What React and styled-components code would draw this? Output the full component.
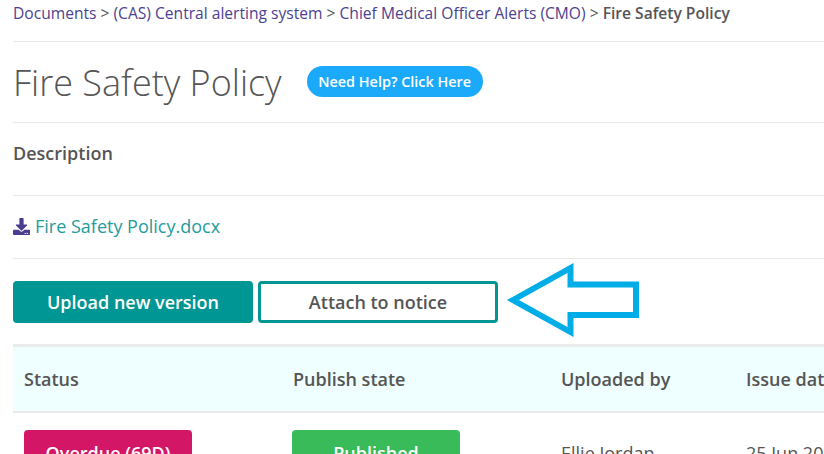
import styled, { createGlobalStyle } from "styled-components";
import { FaDownload } from "react-icons/fa";

const crumbs = [
  "Documents",
  "(CAS) Central alerting system",
  "Chief Medical Officer Alerts (CMO)",
];

const columns = [
  { title: "Status", width: 269 },
  { title: "Publish state", width: 268 },
  { title: "Uploaded by", width: 185 },
  { title: "Issue date", width: 120 },
];

export default function App() {
  return (
    <Page>
      <GlobalStyle />
      <Breadcrumb>
        {crumbs.map((crumb) => (
          <span key={crumb}>
            <CrumbLink>{crumb}</CrumbLink>
            <Separator> &gt; </Separator>
          </span>
        ))}
        <Current>Fire Safety Policy</Current>
      </Breadcrumb>

      <TitleRow>
        <Title>Fire Safety Policy</Title>
        <HelpButton>Need Help? Click Here</HelpButton>
      </TitleRow>

      <DescriptionRow>Description</DescriptionRow>

      <FileRow>
        <FaDownload size={17} color="#4a3c8f" />
        <FileLink>Fire Safety Policy.docx</FileLink>
      </FileRow>

      <Actions>
        <PrimaryButton>Upload new version</PrimaryButton>
        <OutlineButton>Attach to notice</OutlineButton>
        <Arrow width="136" height="82" viewBox="0 0 136 82">
          <path
            d="M8 43 L65.5 11 L65.5 27.5 L131 27.5 L131 58 L65.5 58 L65.5 75 Z"
            fill="none"
            stroke="#00ade6"
            strokeWidth="6"
            strokeMiterlimit="10"
          />
        </Arrow>
      </Actions>

      <TableHead>
        {columns.map((col) => (
          <HeadCell key={col.title} $width={col.width}>
            {col.title}
          </HeadCell>
        ))}
      </TableHead>

      <TableRow>
        <Cell $width={268}>
          <Badge $color="#d31665">Overdue (69D)</Badge>
        </Cell>
        <Cell $width={269}>
          <Badge $color="#38bb58">Published</Badge>
        </Cell>
        <Cell $width={185}>Ellie Jordan</Cell>
        <Cell $width={120}>25 Jun 2021</Cell>
      </TableRow>
    </Page>
  );
}

/* ================= Styles ================= */

const GlobalStyle = createGlobalStyle`
  html, body {
    margin: 0;
    padding: 0;
    background: #fff;
    overflow: hidden;
  }
  body {
    font-family: "Open Sans", "Liberation Sans", sans-serif;
    color: #555;
  }
`;

const Page = styled.div`
  width: 824px;
  height: 454px;
  padding-left: 13px;
  box-sizing: border-box;
  overflow: hidden;
`;

const Breadcrumb = styled.div`
  height: 41px;
  font-size: 15.6px;
  line-height: 27px;
  border-bottom: 1px solid #eaeaea;
  white-space: nowrap;
`;

const CrumbLink = styled.span`
  color: #4d3f8f;
`;

const Separator = styled.span`
  color: #555;
`;

const Current = styled.span`
  font-weight: 600;
  color: #555;
`;

const TitleRow = styled.div`
  height: 80px;
  display: flex;
  align-items: center;
  gap: 25px;
  border-bottom: 1px solid #eaeaea;
`;

const Title = styled.h1`
  margin: 0;
  font-size: 36px;
  font-weight: 300;
  color: #555;
  white-space: nowrap;
`;

const HelpButton = styled.button`
  width: 176px;
  height: 31px;
  margin-bottom: 1px;
  padding: 0;
  border: 0;
  border-radius: 16px;
  background: #1ba9fa;
  color: #fff;
  font-family: inherit;
  font-size: 14.4px;
  font-weight: 600;
`;

const DescriptionRow = styled.div`
  height: 73px;
  padding-top: 17px;
  box-sizing: border-box;
  font-size: 18px;
  font-weight: 600;
  line-height: 26px;
  color: #555;
  border-bottom: 1px solid #eaeaea;
`;

const FileRow = styled.div`
  height: 60px;
  padding-bottom: 2px;
  display: flex;
  align-items: center;
  gap: 5px;
  border-bottom: 1px solid #eaeaea;
`;

const FileLink = styled.span`
  font-size: 18px;
  color: #1f9c9c;
`;

const Actions = styled.div`
  position: relative;
  display: flex;
  gap: 5px;
  padding-top: 22px;
  height: 85px;
  box-sizing: border-box;
`;

const PrimaryButton = styled.button`
  width: 240px;
  height: 42px;
  padding: 0;
  border: 0;
  border-radius: 4px;
  background: #009694;
  color: #fff;
  font-family: inherit;
  font-size: 18px;
  font-weight: 600;
`;

const OutlineButton = styled(PrimaryButton)`
  border: 3px solid #009694;
  background: #fff;
  color: #555;
`;

const Arrow = styled.svg`
  position: absolute;
  left: 492px;
  top: -2px;
`;

const TableHead = styled.div`
  display: flex;
  width: 842px;
  height: 69px;
  box-sizing: border-box;
  align-items: center;
  background: #effefe;
  border-top: 3px solid #eaeaea;
  border-bottom: 2px solid #eaeaea;
  font-size: 18px;
  font-weight: 600;
  color: #555;
`;

const HeadCell = styled.div`
  flex: none;
  width: ${({ $width }) => $width}px;
  padding-left: 11px;
  box-sizing: border-box;
  white-space: nowrap;
`;

const TableRow = styled.div`
  display: flex;
  width: 842px;
  align-items: center;
  padding-top: 17px;
  font-size: 18px;
  color: #555;
`;

const Cell = styled.div`
  flex: none;
  width: ${({ $width }) => $width}px;
  padding-left: 11px;
  box-sizing: border-box;
  white-space: nowrap;
`;

const Badge = styled.div`
  width: 168px;
  height: 46px;
  border-radius: 4px;
  background: ${({ $color }) => $color};
  color: #fff;
  font-size: 18px;
  font-weight: 600;
  line-height: 46px;
  text-align: center;
`;
